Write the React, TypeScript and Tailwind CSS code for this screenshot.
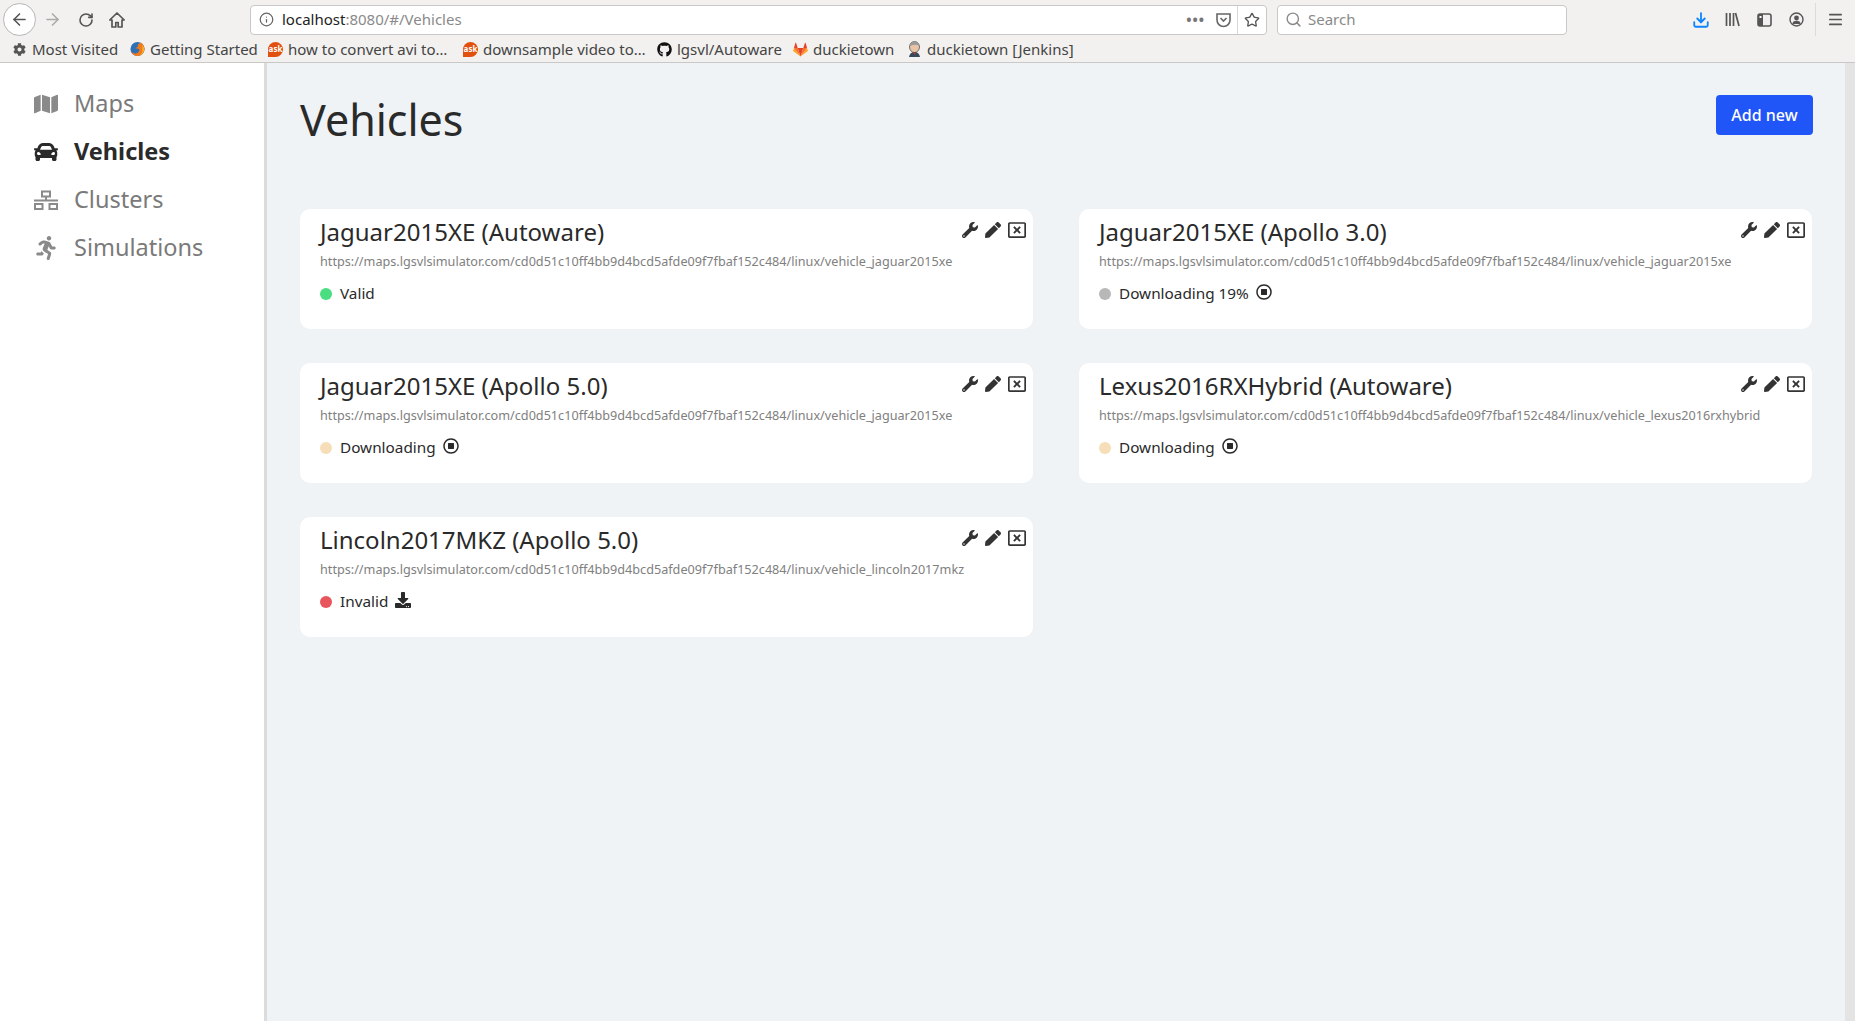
import React from 'react';
import { ArrowLeft, ArrowRight, RotateCw, Search, Info, Star, Menu, Download } from 'lucide-react';
import {
  FaMap,
  FaCar,
  FaRunning,
  FaWrench,
  FaPen,
  FaRegWindowClose,
  FaRegStopCircle,
  FaDownload,
  FaGithub,
  FaCog,
} from 'react-icons/fa';

type Vehicle = {
  name: string;
  file: string;
  status: string;
  dot: string;
  action?: 'stop' | 'download';
};

const BASE_URL = 'https://maps.lgsvlsimulator.com/cd0d51c10ff4bb9d4bcd5afde09f7fbaf152c484/linux/';

const vehicles: Vehicle[] = [
  { name: 'Jaguar2015XE (Autoware)', file: 'vehicle_jaguar2015xe', status: 'Valid', dot: 'bg-[#4ade80]' },
  { name: 'Jaguar2015XE (Apollo 3.0)', file: 'vehicle_jaguar2015xe', status: 'Downloading 19%', dot: 'bg-[#b8b8b8]', action: 'stop' },
  { name: 'Jaguar2015XE (Apollo 5.0)', file: 'vehicle_jaguar2015xe', status: 'Downloading', dot: 'bg-[#f5deb8]', action: 'stop' },
  { name: 'Lexus2016RXHybrid (Autoware)', file: 'vehicle_lexus2016rxhybrid', status: 'Downloading', dot: 'bg-[#f5deb8]', action: 'stop' },
  { name: 'Lincoln2017MKZ (Apollo 5.0)', file: 'vehicle_lincoln2017mkz', status: 'Invalid', dot: 'bg-[#e8555c]', action: 'download' },
];

const AskIcon = () => (
  <span className="flex h-[15px] w-[15px] items-center justify-center rounded-full rounded-bl-[3px] bg-[#e2500f] text-[8px] font-bold leading-none text-white">
    ask
  </span>
);

const FirefoxIcon = () => (
  <svg width="16" height="16" viewBox="0 0 16 16">
    <circle cx="8" cy="8" r="7.5" fill="#2f6fb5" />
    <path d="M8 .5a7.5 7.5 0 1 1-7.3 9.2c.6 1.6 2.6 3.3 5.3 3 3-.3 4.3-2.6 3.6-4.4C9 7.200 7 7.400 6 7.800c.2-1.200 1.200-1.800 2.400-2C7.800 4.200 8.800 2 10.800 1.600 9.900 1 9 .5 8 .5z" fill="#f07a1c" />
    <path d="M13 3.500c1.200 1.500 2 3 2 4.800 0 3.500-2.400 6.400-5.500 7 2.400-1.400 3.800-3.600 3.800-6 0-2.200-.3-4.200-.3-5.800z" fill="#f6b62b" />
  </svg>
);

const GitlabIcon = () => (
  <svg width="16" height="15" viewBox="0 0 16 15">
    <path d="M8 15L5 6h6z" fill="#e24329" />
    <path d="M8 15L5 6H1z" fill="#fc6d26" />
    <path d="M8 15l3-9h4z" fill="#fc6d26" />
    <path d="M1 6L.2 8.500c-.1.300 0 .6.3.8L8 15z" fill="#fca326" />
    <path d="M15 6l.8 2.500c.1.300 0 .6-.3.8L8 15z" fill="#fca326" />
    <path d="M1 6h4L3.200.4c-.1-.3-.5-.3-.6 0z" fill="#e24329" />
    <path d="M15 6h-4L12.800.4c.1-.3.5-.3.6 0z" fill="#e24329" />
  </svg>
);

const JenkinsIcon = () => (
  <svg width="15" height="16" viewBox="0 0 15 16">
    <ellipse cx="7.500" cy="6" rx="5" ry="5.500" fill="#e8c4a8" stroke="#555" strokeWidth="0.8" />
    <path d="M3 5 Q4 0.500 8 0.500 Q12 1 12.500 5 Q9 2.500 3 5Z" fill="#9a9a9a" />
    <path d="M2 16 Q3 11 7.500 11 Q12 11 13 16Z" fill="#34495e" />
    <path d="M6 11.500 L9 11.500 L7.500 14Z" fill="#c0392b" />
  </svg>
);

const HomeIcon = () => (
  <svg width="16" height="16" viewBox="0 0 16 16" className="ml-[15px]">
    <path d="M8 1L.8 8h2.200v7h3.800v-4.500h2.400V15H13V8h2.200z" fill="none" stroke="#555" strokeWidth="1.700" strokeLinejoin="round" />
  </svg>
);

const ClustersIcon = () => (
  <svg width="24" height="20" viewBox="0 0 24 20">
    <path d="M8 1.500h8v5H8zM1 14h7.500v5H1zM15.500 14H23v5h-7.500z" fill="none" stroke="#8a8a8a" strokeWidth="2" />
    <path d="M12 6.500V10M0 10.500h24" stroke="#8a8a8a" strokeWidth="2" fill="none" />
  </svg>
);

const Bookmark = ({ icon, label, width }: { icon: React.ReactNode; label: string; width: string }) => (
  <div className={`flex items-center gap-[5px] ${width}`}>
    <span className="flex w-[15px] shrink-0 items-center justify-center">{icon}</span>
    <span className="whitespace-nowrap">{label}</span>
  </div>
);

const BrowserChrome = () => (
  <header className="h-[63px] shrink-0 border-b border-[#c9c8c6] bg-[#f2f1ef] text-[#4a4a4a]">
    <div className="flex h-[38px] items-center pt-[1px]">
      <div className="ml-[3px] flex h-[33px] w-[33px] items-center justify-center rounded-full border border-[#b5b5b5] bg-white">
        <ArrowLeft size={19} strokeWidth={2} className="text-[#555]" />
      </div>
      <ArrowRight size={19} strokeWidth={2} className="ml-[7px] text-[#aaa]" />
      <RotateCw size={16} strokeWidth={2.4} className="ml-[16px] text-[#555]" />
      <HomeIcon />
      <div className="ml-[125px] flex h-[30px] w-[1017px] items-center rounded-[4px] border border-[#c9c8c6] bg-white text-[15px]">
        <Info size={15} className="ml-[8px] text-[#666]" />
        <span className="ml-[8px] text-[#222]">localhost</span>
        <span className="text-[#8a8a8a]">:8080/#/Vehicles</span>
        <div className="ml-auto flex items-center">
          <span className="mr-[1px] text-[14px] font-bold leading-none tracking-[1px] text-[#777]">•••</span>
          <svg width="17" height="16" viewBox="0 0 17 16" className="ml-[9px]">
            <path d="M2 2h13v6a6.500 6.500 0 0 1-13 0z" fill="none" stroke="#666" strokeWidth="1.600" />
            <path d="M5.500 6l3 3 3-3" fill="none" stroke="#666" strokeWidth="1.600" />
          </svg>
          <span className="ml-[5px] h-[28px] border-l border-[#d8d8d8]" />
          <Star size={16} strokeWidth={2} className="mx-[6px] text-[#555]" />
        </div>
      </div>
      <div className="ml-[10px] flex h-[30px] w-[290px] items-center rounded-[4px] border border-[#c9c8c6] bg-white text-[15px] text-[#8a8a8a]">
        <Search size={17} className="ml-[7px] text-[#8a8a8a]" />
        <span className="ml-[6px]">Search</span>
      </div>
      <Download size={18} strokeWidth={2.400} className="ml-[125px] text-[#0a84ff]" />
      <svg width="15" height="15" viewBox="0 0 15 15" className="ml-[15px]">
        <path d="M1.500 1v13M5 1v13M8.500 1v13M10.500 1l3.500 13" fill="none" stroke="#555" strokeWidth="1.700" />
      </svg>
      <svg width="15" height="14" viewBox="0 0 15 14" className="ml-[17px]">
        <rect x="1" y="1" width="13" height="12" rx="2" fill="none" stroke="#555" strokeWidth="1.600" />
        <rect x="1" y="1" width="5" height="12" fill="#555" />
        <rect x="2.500" y="3" width="2" height="2" fill="#fff" />
      </svg>
      <svg width="15" height="15" viewBox="0 0 15 15" className="ml-[17px]">
        <circle cx="7.500" cy="7.500" r="6.500" fill="none" stroke="#555" strokeWidth="1.400" />
        <circle cx="7.500" cy="6" r="2.400" fill="#555" />
        <path d="M3.500 12a4 3.200 0 0 1 8 0z" fill="#555" />
      </svg>
      <span className="ml-[11px] h-[33px] border-l border-[#dcdbd9]" />
      <Menu size={17} strokeWidth={2.400} className="ml-[11px] text-[#555]" />
    </div>
    <div className="flex h-[24px] items-center pb-[2px] pl-[12px] text-[15px] leading-none text-[#444]">
      <Bookmark width="w-[118px]" icon={<FaCog className="text-[13px] text-[#555]" />} label="Most Visited" />
      <Bookmark width="w-[138px]" icon={<FirefoxIcon />} label="Getting Started" />
      <Bookmark width="w-[195px]" icon={<AskIcon />} label="how to convert avi to…" />
      <Bookmark width="w-[194px]" icon={<AskIcon />} label="downsample video to…" />
      <Bookmark width="w-[136px]" icon={<FaGithub className="text-[15px] text-[#111]" />} label="lgsvl/Autoware" />
      <Bookmark width="w-[114px]" icon={<GitlabIcon />} label="duckietown" />
      <Bookmark width="w-[170px]" icon={<JenkinsIcon />} label="duckietown [Jenkins]" />
    </div>
  </header>
);

const navItems = [
  { label: 'Maps', icon: <FaMap /> },
  { label: 'Vehicles', icon: <FaCar />, active: true },
  { label: 'Clusters', icon: <ClustersIcon /> },
  { label: 'Simulations', icon: <FaRunning /> },
];

const Sidebar = () => (
  <aside className="flex w-[267px] shrink-0 flex-col border-r-[3px] border-[#dcdcdc] bg-white pl-[34px] pt-[17px]">
    {navItems.map((item) => (
      <div
        key={item.label}
        className={`flex h-[48px] items-center text-[23.500px] ${item.active ? 'font-bold text-[#2a2a2a]' : 'text-[#7a7a7a]'}`}
      >
        <span className={`w-[40px] text-[24px] ${item.active ? 'text-[#2a2a2a]' : 'text-[#8a8a8a]'}`}>{item.icon}</span>
        {item.label}
      </div>
    ))}
  </aside>
);

const VehicleCard = ({ vehicle }: { vehicle: Vehicle }) => (
  <div className="relative h-[120px] rounded-[10px] bg-white pl-[20px] pt-[5px] text-[#2a2a2a]">
    <div className="absolute right-[7px] top-[12px] flex items-center gap-[7px] text-[16px] text-[#333]">
      <FaWrench />
      <FaPen />
      <FaRegWindowClose className="text-[18px]" />
    </div>
    <h2 className="text-[24px] leading-[36px]">{vehicle.name}</h2>
    <p className="mt-[1px] text-[12.650px] leading-[20px] text-[#808080]">
      {BASE_URL}
      {vehicle.file}
    </p>
    <div className="mt-[5px] flex h-[35px] items-center text-[15.300px]">
      <span className={`mr-[7px] h-[12px] w-[12px] rounded-full ${vehicle.dot}`} />
      <span className="ml-[1px]">{vehicle.status}</span>
      {vehicle.action === 'stop' && <FaRegStopCircle className="mb-[4px] ml-[7px] text-[16px]" />}
      {vehicle.action === 'download' && <FaDownload className="mb-[4px] ml-[7px] text-[16px]" />}
    </div>
  </div>
);

export default function App() {
  return (
    <div className="flex h-screen w-screen flex-col overflow-hidden font-['Noto_Sans','Liberation_Sans',sans-serif]">
      <BrowserChrome />
      <div className="flex min-h-0 flex-1">
        <Sidebar />
        <main className="min-w-0 flex-1 bg-[#eff3f6] pl-[33px] pr-[32px]">
          <div className="flex items-start justify-between pt-[32px]">
            <h1 className="-mt-[3px] text-[43px] leading-[56px] text-[#2a2a2a]">Vehicles</h1>
            <button className="h-[40px] w-[97px] rounded-[4px] bg-[#2056f7] text-[16px] font-medium text-white">Add new</button>
          </div>
          <div className="mr-[1px] mt-[61px] grid grid-cols-2 gap-x-[46px] gap-y-[34px]">
            {vehicles.map((vehicle) => (
              <VehicleCard key={vehicle.name} vehicle={vehicle} />
            ))}
          </div>
        </main>
        <div className="w-[10px] shrink-0 bg-[#e4e4e4]" />
      </div>
    </div>
  );
}
